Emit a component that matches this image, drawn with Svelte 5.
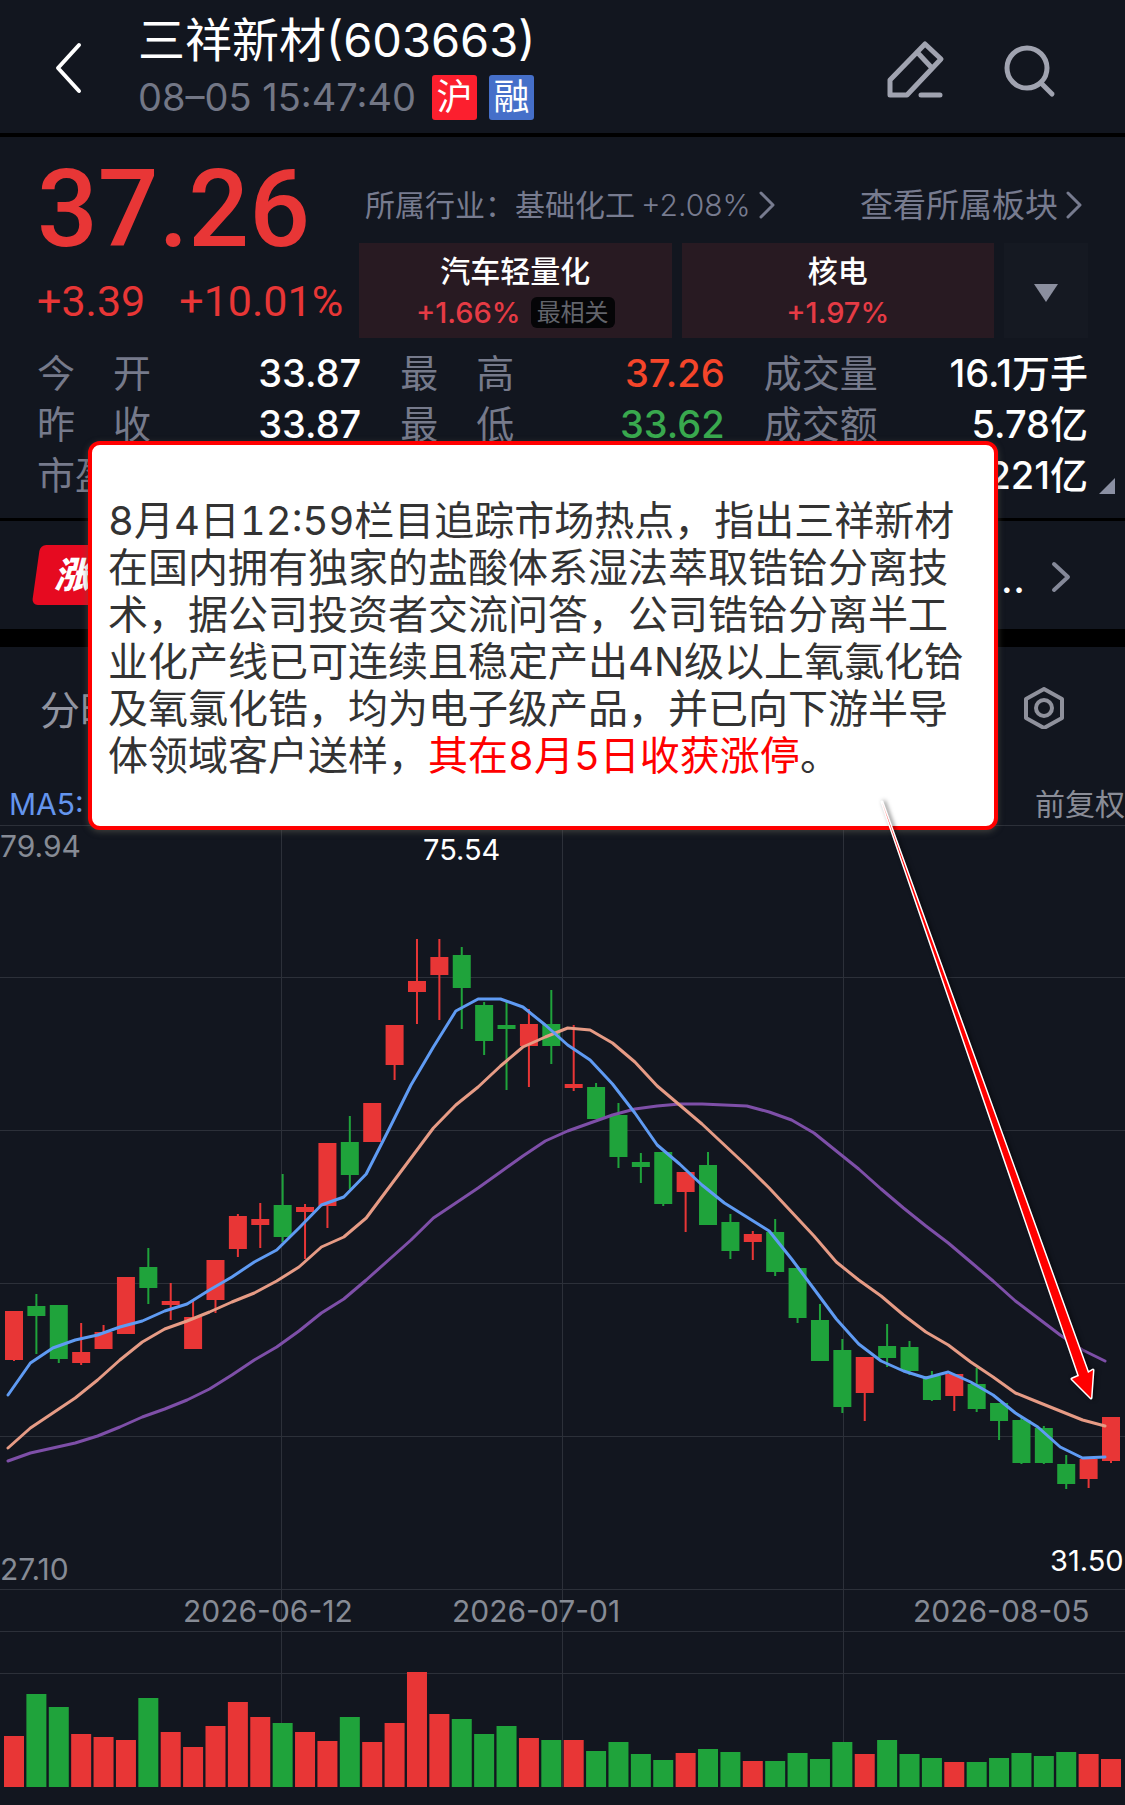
<script lang="ts">
	interface Candle {
		up: boolean;
		high: number;
		top: number;
		bottom: number;
		low: number;
		volume: number;
	}

	// [direction, high, body top, body bottom, low, volume], in chart units
	const rows: [string, number, number, number, number, number][] = [
		['r', 487, 487, 536, 537, 51],
		['g', 470, 482, 492, 530, 93],
		['g', 481, 481, 535, 539, 80],
		['r', 499, 528, 539, 541, 53],
		['r', 501, 508, 525, 525, 50],
		['r', 453, 453, 510, 510, 47],
		['g', 424, 443, 464, 480, 89],
		['r', 459, 477, 481, 496, 55],
		['r', 477, 493, 525, 525, 40],
		['r', 436, 436, 476, 489, 61],
		['r', 390, 392, 425, 433, 85],
		['r', 379, 395, 401, 424, 70],
		['g', 350, 381, 413, 418, 64],
		['r', 380, 383, 388, 435, 55],
		['r', 319, 319, 382, 404, 46],
		['g', 292, 318, 351, 365, 70],
		['r', 279, 279, 318, 318, 45],
		['r', 201, 201, 241, 256, 64],
		['r', 115, 157, 168, 200, 115],
		['r', 115, 133, 151, 196, 73],
		['g', 123, 131, 164, 205, 68],
		['g', 178, 181, 217, 231, 53],
		['g', 176, 201, 205, 266, 61],
		['r', 185, 200, 222, 263, 49],
		['g', 166, 200, 222, 240, 47],
		['r', 201, 260, 264, 267, 47],
		['g', 259, 263, 295, 295, 36],
		['g', 279, 291, 333, 344, 45],
		['g', 329, 338, 343, 359, 33],
		['g', 328, 328, 380, 382, 27],
		['r', 348, 348, 368, 408, 34],
		['g', 328, 341, 401, 401, 38],
		['g', 390, 398, 427, 435, 35],
		['r', 407, 410, 418, 436, 26],
		['g', 395, 408, 448, 452, 26],
		['g', 444, 444, 494, 499, 34],
		['g', 480, 496, 537, 537, 28],
		['g', 515, 526, 583, 589, 45],
		['r', 533, 533, 569, 597, 33],
		['g', 500, 522, 534, 543, 47],
		['g', 517, 523, 547, 551, 33],
		['g', 547, 552, 576, 577, 29],
		['r', 550, 550, 572, 587, 25],
		['g', 544, 560, 585, 588, 25],
		['g', 579, 579, 597, 616, 29],
		['g', 592, 596, 639, 640, 34],
		['g', 602, 604, 639, 640, 31],
		['g', 631, 640, 660, 665, 35],
		['r', 635, 635, 655, 664, 33],
		['r', 593, 593, 637, 639, 28],
	];

	const candles: Candle[] = rows.map(([dir, high, top, bottom, low, volume]) => ({
		up: dir === 'r',
		high,
		top,
		bottom,
		low,
		volume,
	}));

	const ma5 = [
		571, 539, 524, 516, 511, 503, 497, 487, 480, 466, 453, 438, 426, 404, 381, 373, 350, 306, 261, 223, 187, 175, 175,
		183, 201, 221, 236, 260, 289, 321, 340, 361, 379, 393, 407, 435, 465, 495, 520, 537, 547, 554, 548, 558, 571, 589,
		603, 623, 634, 633,
	];
	const ma10 = [
		624, 604, 589, 574, 556, 536, 518, 505, 497, 488, 478, 469, 457, 443, 423, 413, 394, 364, 334, 304, 281, 263, 242,
		223, 213, 204, 206, 219, 238, 262, 281, 300, 321, 342, 364, 388, 412, 438, 456, 472, 491, 508, 521, 538, 553, 569,
		578, 587, 596, 602,
	];
	const ma20 = [
		637, 629, 624, 619, 612, 603, 593, 585, 576, 565, 551, 536, 523, 507, 489, 475, 456, 436, 416, 394, 379, 364, 348,
		332, 317, 307, 299, 291, 285, 282, 280, 280, 281, 282, 288, 296, 309, 327, 345, 365, 384, 402, 419, 438, 457, 477,
		494, 511, 526, 537,
	];

	const step = (1111 - 14) / 49;
	const volumeBase = 963;
	const gridRows = [1, 153, 306, 459, 612, 765, 807, 849];
	const gridCols = [281, 562, 843];

	const centre = (i: number) => 14 + i * step;
	const toPoints = (values: number[]) => values.map((y, i) => `${(8 + i * step).toFixed(1)},${y}`).join(' ');

	const stats = [
		{ label: '今开', value: '33.87', tone: '' },
		{ label: '最高', value: '37.26', tone: 'rise' },
		{ label: '成交量', value: '16.1万手', tone: '' },
		{ label: '昨收', value: '33.87', tone: '' },
		{ label: '最低', value: '33.62', tone: 'fall' },
		{ label: '成交额', value: '5.78亿', tone: '' },
		{ label: '市盈率', value: '', tone: '' },
		{ label: '', value: '', tone: '' },
		{ label: '', value: '221亿', tone: '' },
	];
</script>

<div class="page">
	<header>
		<button class="back" aria-label="返回">
			<svg width="28" height="54" viewBox="0 0 28 54"><path d="M25 4 4 27l21 23" /></svg>
		</button>
		<div class="title">
			<h1>三祥新材(603663)</h1>
			<div class="subtitle">
				<time>08–05 15:47:40</time>
				<span class="mark hu">沪</span>
				<span class="mark rong">融</span>
			</div>
		</div>
		<div class="tools">
			<button aria-label="编辑">
				<svg width="60" height="60" viewBox="0 0 60 60">
					<path d="M39 6 55 21 21 57H4V42Z M31 14 45 29 M35 57H54" />
				</svg>
			</button>
			<button aria-label="搜索">
				<svg width="60" height="60" viewBox="0 0 60 60">
					<circle cx="27" cy="30" r="20" />
					<path d="M41 45 52 56" />
				</svg>
			</button>
		</div>
	</header>

	<section class="quote">
		<div class="summary">
			<div class="price">
				<strong>37.26</strong>
				<p><span>+3.39</span><span>+10.01%</span></p>
			</div>
			<div class="sectors">
				<div class="links">
					<a class="industry" href="#industry">
						所属行业：基础化工<span class="pct">+2.08%</span>
						<svg width="16" height="28" viewBox="0 0 16 28"><path d="M2 2 14 14 2 26" /></svg>
					</a>
					<a class="boards" href="#boards">
						查看所属板块
						<svg width="16" height="28" viewBox="0 0 16 28"><path d="M2 2 14 14 2 26" /></svg>
					</a>
				</div>
				<div class="tags">
					<button class="tag">
						<b>汽车轻量化</b>
						<span class="tagLine">+1.66% <i>最相关</i></span>
					</button>
					<button class="tag">
						<b>核电</b>
						<span class="tagLine">+1.97%</span>
					</button>
					<button class="more" aria-label="更多板块">
						<svg width="26" height="20" viewBox="0 0 26 20"><path d="M1 1H25L13 19Z" /></svg>
					</button>
				</div>
			</div>
		</div>

		<dl class="stats">
			{#each stats as stat}
				<div class="stat">
					<dt>
						{#each stat.label.split('') as char}<span>{char}</span>{/each}
					</dt>
					<dd class={stat.tone}>{stat.value}</dd>
				</div>
			{/each}
		</dl>
		<svg class="corner" width="16" height="16" viewBox="0 0 16 16"><path d="M16 0V16H0Z" /></svg>
	</section>

	<section class="news">
		<em class="ribbon">涨停</em>
		<button class="newsMore">
			<span>...</span>
			<svg width="20" height="32" viewBox="0 0 20 32"><path d="M3 3 17 16 3 29" /></svg>
		</button>
	</section>

	<nav class="tabs">
		<button class="tab">分时</button>
		<button class="settings" aria-label="图表设置">
			<svg width="40" height="42" viewBox="0 0 40 42">
				<path d="M20 2 38 12V31L20 41 2 31V12Z" />
				<circle cx="20" cy="21" r="8" />
			</svg>
		</button>
	</nav>

	<div class="legend">
		<span class="ma">MA5:</span>
		<button class="adjust">前复权</button>
	</div>

	<div class="chart">
		<svg class="plot" viewBox="0 0 1125 981" role="img" aria-label="日K线">
			<g class="grid">
				{#each gridRows as y}
					<line x1="0" x2="1125" y1={y} y2={y} />
				{/each}
				{#each gridCols as x}
					<line x1={x} x2={x} y1="0" y2={volumeBase} />
				{/each}
			</g>

			{#each candles as c, i}
				<g class={c.up ? 'up' : 'down'}>
					<rect x={centre(i) - 1} y={c.high} width="2" height={c.low - c.high} />
					<rect x={centre(i) - 9} y={c.top} width="18" height={c.bottom - c.top} />
					<rect x={centre(i) - 10} y={volumeBase - c.volume} width="20" height={c.volume} />
				</g>
			{/each}

			<polyline class="line ma20" points={toPoints(ma20)} />
			<polyline class="line ma10" points={toPoints(ma10)} />
			<polyline class="line ma5" points={toPoints(ma5)} />

			<text x="0" y="33">79.94</text>
			<text x="0" y="756">27.10</text>
			<text class="peak" x="423" y="36">75.54</text>
			<text class="peak" x="1050" y="747">31.50</text>
			<text x="183" y="798">2026-06-12</text>
			<text x="452" y="798">2026-07-01</text>
			<text x="913" y="798">2026-08-05</text>
		</svg>
		<svg class="pointer" viewBox="0 0 1125 981" aria-hidden="true">
			<path d="M882 -22 1079 552 1072 555 1091 574 1093 546 1088 549Z" />
		</svg>
	</div>

	<aside class="callout">
		8月4日12:59栏目追踪市场热点，指出三祥新材在国内拥有独家的盐酸体系湿法萃取锆铪分离技术，据公司投资者交流问答，公司锆铪分离半工业化产线已可连续且稳定产出4N级以上氧氯化铪及氧氯化锆，均为电子级产品，并已向下游半导体领域客户送样，<mark>其在8月5日收获涨停</mark>。
	</aside>
</div>

<style>
	:global(body) {
		background: #12161f;
	}

	.page {
		position: relative;
		overflow: hidden;
		background: #12161f;
		color: #fff;
		font-family: Inter, 'Noto Sans CJK SC', sans-serif;
	}

	button {
		background: none;
		border: none;
		color: inherit;
		cursor: pointer;
		font: inherit;
		margin: 0;
		padding: 0;
	}

	a {
		color: inherit;
		text-decoration: none;
	}

	svg {
		display: block;
		fill: none;
		stroke-linecap: round;
		stroke-linejoin: round;
	}

	header {
		display: flex;
		align-items: center;
		padding: 12px 65px 13px 54px;
		border-bottom: 4px solid #000;
	}

	header button {
		padding-top: 4px;
	}

	.back svg {
		stroke: #fff;
		stroke-width: 4;
	}

	.title {
		flex: 1;
		margin-left: 56px;
	}

	h1 {
		margin: 0;
		font-size: 47px;
		font-weight: 400;
		line-height: 56px;
	}

	.subtitle {
		display: flex;
		align-items: center;
		gap: 12px;
		margin-top: 7px;
	}

	time {
		margin-right: 4px;
		color: #737786;
		font-size: 38px;
		line-height: 45px;
	}

	.mark {
		width: 45px;
		border-radius: 3px;
		font-size: 36px;
		line-height: 45px;
		text-align: center;
	}

	.hu {
		background: #fc1f2e;
	}

	.rong {
		background: #456fc9;
	}

	.tools {
		display: flex;
		gap: 54px;
	}

	.tools svg {
		stroke: #a0a3b0;
		stroke-width: 5;
	}

	.quote {
		position: relative;
		padding: 18px 37px 17px;
		border-bottom: 3px solid #000;
	}

	.summary {
		display: flex;
	}

	.price {
		flex: none;
		width: 322px;
		color: #e83636;
		font-family: Roboto, sans-serif;
	}

	.price strong {
		display: block;
		font-size: 107px;
		font-weight: 500;
		line-height: 110px;
	}

	.price p {
		display: flex;
		gap: 34px;
		margin: 10px 0 0;
		font-size: 43px;
		font-weight: 400;
		line-height: 52px;
	}

	.sectors {
		flex: 1;
		margin-top: 28px;
	}

	.links {
		display: flex;
		justify-content: space-between;
		padding: 0 6px;
		line-height: 44px;
		color: #777b8f;
	}

	.links a {
		display: flex;
		align-items: center;
	}

	.links svg {
		margin-left: 8px;
		stroke: #777b8f;
		stroke-width: 3;
	}

	.industry {
		font-size: 30px;
	}

	.pct {
		margin-left: 6px;
		font-weight: 300;
	}

	.boards {
		font-size: 33px;
	}

	.tags {
		display: flex;
		gap: 10px;
		margin-top: 16px;
	}

	.tag {
		flex: 1;
		height: 95px;
		padding-top: 2px;
		background: #281a22;
		font-size: 30px;
	}

	.tag b {
		display: block;
		font-weight: 500;
		line-height: 42px;
	}

	.tagLine {
		display: flex;
		align-items: center;
		justify-content: center;
		gap: 10px;
		color: #e63b45;
		font-size: 29px;
		font-weight: 500;
		line-height: 42px;
	}

	.tagLine i {
		padding: 0 6px;
		border-radius: 6px;
		background: #050507;
		color: #62646b;
		font-size: 24px;
		font-style: normal;
		font-weight: 400;
		line-height: 31px;
	}

	.more {
		display: flex;
		align-items: center;
		justify-content: center;
		width: 84px;
		padding-top: 4px;
		background: #151922;
	}

	.more path {
		fill: #8b8f9f;
	}

	.stats {
		display: grid;
		grid-template-columns: repeat(3, 1fr);
		column-gap: 39px;
		margin: 10px 0 0;
		font-size: 38px;
		line-height: 51px;
	}

	.stat {
		display: flex;
		justify-content: space-between;
		min-height: 51px;
	}

	dt {
		display: flex;
		justify-content: space-between;
		width: 114px;
		color: #767a8b;
	}

	dd {
		margin: 0;
		font-weight: 500;
	}

	.rise {
		color: #f5452a;
	}

	.fall {
		color: #39a94e;
	}

	.corner {
		position: absolute;
		right: 10px;
		bottom: 24px;
		fill: #8b90a3;
	}

	.news {
		display: flex;
		align-items: center;
		justify-content: space-between;
		height: 108px;
		padding: 0 54px 0 36px;
		border-bottom: 18px solid #000;
	}

	.ribbon {
		position: relative;
		z-index: 0;
		padding: 0 18px;
		font-size: 36px;
		font-weight: 900;
		line-height: 60px;
	}

	.ribbon::before {
		content: '';
		position: absolute;
		inset: 0;
		z-index: -1;
		border-radius: 6px;
		background: #e60a20;
		transform: skewX(-8deg);
	}

	.newsMore {
		display: flex;
		align-items: center;
		gap: 26px;
		padding-top: 4px;
		font-size: 42px;
	}

	.newsMore svg {
		stroke: #858999;
		stroke-width: 4;
	}

	.tabs {
		display: flex;
		align-items: center;
		justify-content: space-between;
		height: 122px;
		padding: 0 61px 0 40px;
	}

	.tab {
		color: #9194a0;
		font-size: 40px;
	}

	.settings svg {
		stroke: #8f919c;
		stroke-width: 4;
	}

	.legend {
		display: flex;
		justify-content: space-between;
		padding: 15px 0 0 9px;
		font-size: 30px;
		line-height: 40px;
	}

	.ma {
		color: #6495ed;
	}

	.adjust {
		color: #8a8d97;
	}

	.chart {
		position: relative;
	}

	.plot,
	.pointer {
		width: 100%;
		height: auto;
	}

	.grid {
		stroke: #2c3039;
		stroke-width: 1;
		shape-rendering: crispEdges;
	}

	.up {
		fill: #e83636;
	}

	.down {
		fill: #1fa33b;
	}

	.line {
		stroke-width: 3;
	}

	.ma5 {
		stroke: #5f9bf3;
	}

	.ma10 {
		stroke: #e69b85;
	}

	.ma20 {
		stroke: #7e4fa8;
	}

	.plot text {
		fill: #868b95;
		font-size: 30px;
	}

	.plot .peak {
		fill: #fff;
		font-size: 29px;
	}

	.pointer {
		position: absolute;
		inset: 0;
		z-index: 2;
		overflow: visible;
		filter: drop-shadow(2px 0 2px rgba(0, 0, 0, 0.5));
		pointer-events: none;
	}

	.pointer path {
		fill: #f00;
		stroke: #fff;
		stroke-width: 3;
		paint-order: stroke;
	}

	.callout {
		position: absolute;
		top: 441px;
		left: 88px;
		right: 127px;
		z-index: 1;
		padding: 52px 16px 47px;
		border: 4px solid #f00;
		border-radius: 12px;
		background: #fff;
		box-shadow: 0 2px 6px rgba(90, 90, 80, 0.6);
		box-sizing: border-box;
		color: #333;
		font-size: 40px;
		font-variant-numeric: tabular-nums;
		line-height: 47px;
	}

	mark {
		background: none;
		color: #f00;
	}
</style>
